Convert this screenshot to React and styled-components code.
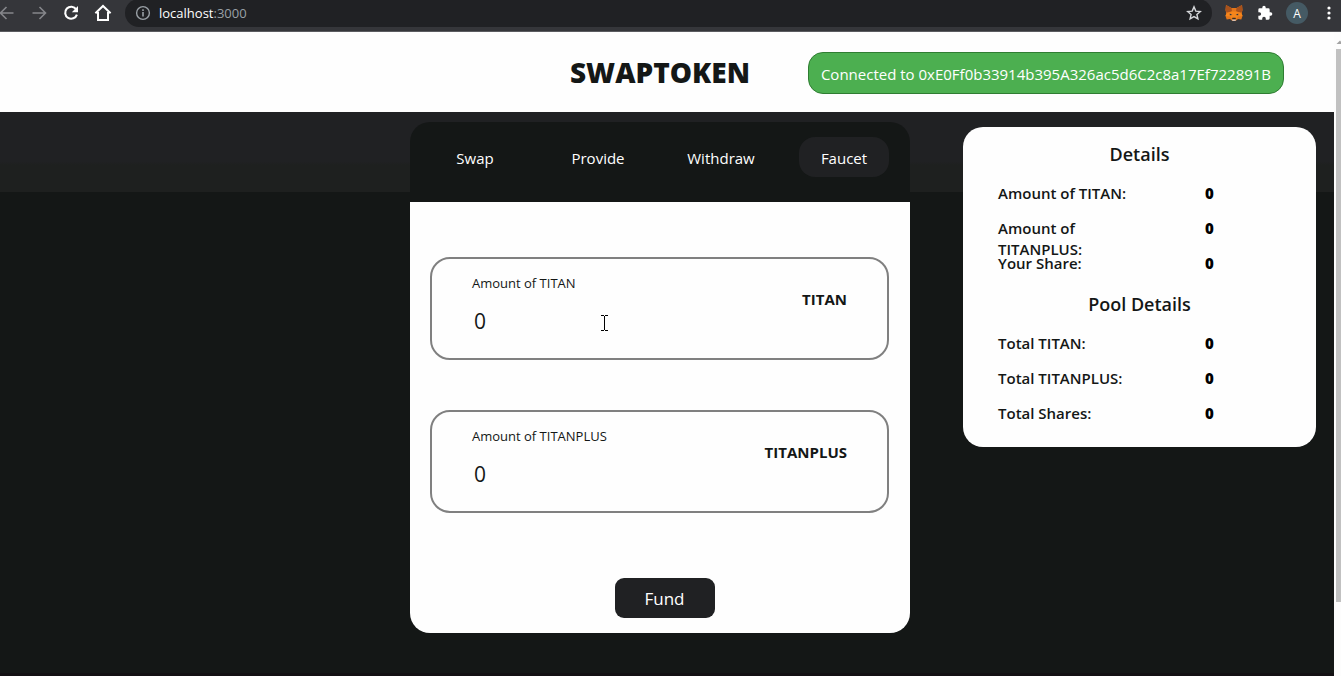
import React from 'react';
import styled, { createGlobalStyle } from 'styled-components';

const GlobalStyle = createGlobalStyle`
  *, *::before, *::after { box-sizing: border-box; }
  body {
    margin: 0;
    background: #141716;
    color: #141716;
    font-family: "Open Sans", "Noto Sans", sans-serif;
    font-size: 15px;
  }
  h1, h2, dl, dd { margin: 0; }
  button, input { font-family: inherit; }
`;

const Browser = styled.div`
  display: flex;
  flex-direction: column;
  min-height: 100vh;
`;

const Toolbar = styled.div`
  display: flex;
  align-items: center;
  height: 32px;
  padding: 0 2px 5px 0;
  background: #35363a;
  border-bottom: 1px solid #5b5c60;
`;

const NavButtons = styled.div`
  display: flex;
  gap: 12px;
  margin-left: -3px;
`;

const ToolButton = styled.button`
  display: flex;
  align-items: center;
  justify-content: center;
  width: 20px;
  height: 20px;
  padding: 0;
  border: 0;
  background: none;
  color: ${(p) => (p.$dim ? '#85868a' : '#ffffff')};
`;

const AddressBar = styled.div`
  flex: 1;
  display: flex;
  align-items: center;
  gap: 8px;
  height: 28px;
  margin: 0 12px;
  padding: 0 8px 0 10px;
  border-radius: 14px;
  background: #202124;
  color: #9aa0a6;
  font-size: 13px;
`;

const Url = styled.span`
  flex: 1;
  b { color: #ffffff; font-weight: 400; }
`;

const Extensions = styled.div`
  display: flex;
  align-items: center;
  gap: 11px;
`;

const Avatar = styled.button`
  width: 22px;
  height: 22px;
  padding: 0;
  border: 0;
  border-radius: 50%;
  background: #455a64;
  color: #ffffff;
  font-size: 12px;
`;

const Viewport = styled.div`
  flex: 1;
  display: flex;
`;

const Page = styled.div`
  flex: 1;
  min-width: 0;
  display: flex;
  flex-direction: column;
  border-bottom: 3px solid #131013;
`;

const Scrollbar = styled.div`
  display: flex;
  flex-direction: column;
  width: 7px;
  padding: 8px 0 0 2px;
  background: #fdfdfd;
  svg { flex: none; }
`;

const Thumb = styled.div`
  height: 87%;
  background: #c1c1c1;
`;

const Header = styled.header`
  display: flex;
  align-items: center;
  justify-content: flex-end;
  gap: 58px;
  height: 80px;
  padding: 2px 50px 0 20px;
  background: #fefefe;
`;

const Title = styled.h1`
  font-size: 28px;
  line-height: 40px;
  padding-bottom: 2px;
  font-weight: 800;
`;

const Connection = styled.button`
  width: 476px;
  height: 42px;
  padding: 2px 0 0;
  border: 1px solid #2f7d32;
  border-radius: 15px;
  background: #4caf50;
  color: #ffffff;
  font-size: 15px;
  white-space: nowrap;
`;

const Main = styled.main`
  flex: 1;
  display: grid;
  grid-template-columns: minmax(0, 1fr) 500px minmax(0, 1fr);
  align-items: start;
  padding: 10px 14px 40px 0;
  background: linear-gradient(#202123 0 62%, #1e201f 66%) no-repeat top / 100% 80px, #141716;
`;

const Card = styled.section`
  grid-column: 2;
`;

const Tabs = styled.nav`
  display: flex;
  justify-content: space-between;
  height: 80px;
  padding: 15px 21px 0 20px;
  border-radius: 20px 20px 0 0;
  background: #141716;
`;

const Tab = styled.button`
  width: 90px;
  height: 40px;
  padding: 2px 0 0;
  border: 0;
  border-radius: 16px;
  background: ${(p) => (p.$active ? '#202123' : 'transparent')};
  color: #ffffff;
  font-size: 15px;
`;

const Form = styled.form`
  display: flex;
  flex-direction: column;
  gap: 50px;
  padding: 55px 21px 15px 20px;
  border-radius: 0 0 20px 20px;
  background: #fefefe;
`;

const FieldBox = styled.div`
  position: relative;
  display: flex;
  justify-content: space-between;
  height: 103px;
  padding: 14px 40px 0;
  border: 2px solid #808080;
  border-radius: 20px;
`;

const Entry = styled.div`
  display: flex;
  flex-direction: column;
  gap: 11px;
`;

const Label = styled.label`
  font-size: 13px;
  line-height: 20px;
`;

const Amount = styled.input`
  width: 220px;
  height: 34px;
  padding: 0 2px;
  border: 0;
  outline: 0;
  background: transparent;
  color: #141716;
  font-size: 21px;
`;

const Symbol = styled.span`
  padding-top: 16px;
  font-size: 15px;
  line-height: 20px;
  font-weight: 700;
`;

const TextCursor = styled.svg`
  position: absolute;
  left: 168px;
  top: 55px;
`;

const FundButton = styled.button`
  align-self: center;
  width: 100px;
  height: 40px;
  margin: 15px 0 0 10px;
  padding: 0;
  border: 0;
  border-radius: 9px;
  background: #202123;
  color: #ffffff;
  font-size: 17px;
`;

const Details = styled.aside`
  justify-self: end;
  width: 353px;
  max-width: 100%;
  margin: 5px 4px 0 0;
  padding: 7px 35px 13px;
  border-radius: 20px;
  background: #fefefe;
`;

const Heading = styled.h2`
  height: 40px;
  font-size: 18px;
  line-height: 40px;
  font-weight: 600;
  text-align: center;
`;

const Stats = styled.dl`
  padding-top: 5px;
`;

const Stat = styled.div`
  display: grid;
  grid-template-columns: 140px 1fr;
  column-gap: 67px;
  height: 35px;
  padding-top: 4px;
  font-size: 15px;
  line-height: 21px;
  dt { font-weight: 600; }
  dd { font-weight: 800; color: #000000; }
`;

const yourDetails = [
  ['Amount of TITAN:', '0'],
  ['Amount of TITANPLUS:', '0'],
  ['Your Share:', '0'],
];

const poolDetails = [
  ['Total TITAN:', '0'],
  ['Total TITANPLUS:', '0'],
  ['Total Shares:', '0'],
];

const Arrow = ({ flip }) => (
  <svg width="16" height="16" viewBox="0 0 16 16" fill="none" stroke="currentColor" strokeWidth="1.6">
    <path d={flip ? 'M1.5 8h12.5M8.5 2l6 6-6 6' : 'M14.5 8H2M7.5 2l-6 6 6 6'} />
  </svg>
);

const Reload = () => (
  <svg width="16" height="16" viewBox="0 0 16 16" fill="none" stroke="currentColor" strokeWidth="2.1">
    <path d="M13.2 4.4A6 6 0 1 0 13.9 9.6" />
    <path d="M15 1v6.2H8.8z" fill="currentColor" stroke="none" />
  </svg>
);

const Home = () => (
  <svg width="18" height="18" viewBox="0 0 18 18" fill="none" stroke="currentColor" strokeWidth="2">
    <path d="M1.4 9.3 9 2l7.6 7.3M4 8v8h10V8" />
  </svg>
);

const Info = () => (
  <svg width="16" height="16" viewBox="0 0 16 16" fill="none" stroke="currentColor" strokeWidth="1.4">
    <circle cx="8" cy="8" r="6.4" />
    <path d="M8 7v4.6M8 4.2v1.8" strokeWidth="1.6" />
  </svg>
);

const Star = () => (
  <svg width="16" height="16" viewBox="0 0 16 16" fill="none" stroke="#d5d7da" strokeWidth="1.4">
    <path d="M8 1.9l1.8 4.2 4.5.4-3.4 3 1 4.4L8 11.6l-3.9 2.3 1-4.4-3.4-3 4.5-.4z" />
  </svg>
);

const Fox = () => (
  <svg width="18" height="18" viewBox="0 0 18 18">
    <path d="M1 1 6.500 4h5L17 1l.5 5-.8 3.500.8 2.500-1.200 3.500-3.300-.5-2.500 2h-3L5 15l-3.300.5L.5 12l.8-2.500L.5 6z" fill="#e2761b" />
    <path d="M1 1 6.500 4 7 7.500 1.500 8.500.5 6zM17 1l-5.500 3-.5 3.500 5.500 1 1-2.500z" fill="#a8521c" />
    <path d="M1.300 9.500 6.500 7.500h5l5.200 2 .8 2.500-4.500.5-2 2.500h-4l-2-2.500L.5 12z" fill="#f6851b" />
    <path d="M4.800 9.600l2.500 1.300-2.500.4zM13.200 9.600l-2.500 1.300 2.500.4z" fill="#233447" />
    <path d="M7.400 13.800h3.200l.4 1.800H7z" fill="#3a2c20" />
    <path d="M6.800 15.600h4.400l-.8 1.400H7.600z" fill="#d7c1b3" />
  </svg>
);

const Puzzle = () => (
  <svg width="16" height="16" viewBox="0 0 24 24" fill="currentColor">
    <path d="M20.500 11H19V7a2 2 0 0 0-2-2h-4V3.500a2.500 2.500 0 0 0-5 0V5H4a2 2 0 0 0-2 2v3.800h1.500a2.700 2.700 0 0 1 0 5.400H2V20a2 2 0 0 0 2 2h3.800v-1.500a2.700 2.700 0 0 1 5.400 0V22H17a2 2 0 0 0 2-2v-4h1.500a2.500 2.500 0 0 0 0-5z" />
  </svg>
);

const Menu = () => (
  <svg width="4" height="16" viewBox="0 0 4 16" fill="currentColor">
    <circle cx="2" cy="3" r="1.600" /><circle cx="2" cy="8" r="1.600" /><circle cx="2" cy="13" r="1.600" />
  </svg>
);

function TokenField({ id, token, children }) {
  return (
    <FieldBox>
      <Entry>
        <Label htmlFor={id}>Amount of {token}</Label>
        <Amount id={id} type="text" inputMode="decimal" defaultValue="0" />
      </Entry>
      <Symbol>{token}</Symbol>
      {children}
    </FieldBox>
  );
}

function StatList({ rows }) {
  return (
    <Stats>
      {rows.map(([name, value]) => (
        <Stat key={name}>
          <dt>{name}</dt>
          <dd>{value}</dd>
        </Stat>
      ))}
    </Stats>
  );
}

export default function App() {
  return (
    <Browser>
      <GlobalStyle />
      <Toolbar>
        <NavButtons>
          <ToolButton $dim aria-label="Back"><Arrow /></ToolButton>
          <ToolButton $dim aria-label="Forward"><Arrow flip /></ToolButton>
          <ToolButton aria-label="Reload"><Reload /></ToolButton>
          <ToolButton aria-label="Home"><Home /></ToolButton>
        </NavButtons>
        <AddressBar>
          <Info />
          <Url><b>localhost</b>:3000</Url>
          <ToolButton aria-label="Bookmark"><Star /></ToolButton>
        </AddressBar>
        <Extensions>
          <ToolButton aria-label="Wallet"><Fox /></ToolButton>
          <ToolButton aria-label="Extensions"><Puzzle /></ToolButton>
          <Avatar aria-label="Profile">A</Avatar>
          <ToolButton aria-label="Menu"><Menu /></ToolButton>
        </Extensions>
      </Toolbar>
      <Viewport>
        <Page>
          <Header>
            <Title>SWAPTOKEN</Title>
            <Connection>Connected to 0xE0Ff0b33914b395A326ac5d6C2c8a17Ef722891B</Connection>
          </Header>
          <Main>
            <Card>
              <Tabs>
                <Tab>Swap</Tab>
                <Tab>Provide</Tab>
                <Tab>Withdraw</Tab>
                <Tab $active>Faucet</Tab>
              </Tabs>
              <Form>
                <TokenField id="titan" token="TITAN">
                  <TextCursor width="9" height="18" viewBox="0 0 9 18" fill="none" stroke="#000000" aria-hidden="true">
                    <path d="M1 1.500h3M5 1.500h3M4.500 2v14M1 16.500h3M5 16.500h3" />
                  </TextCursor>
                </TokenField>
                <TokenField id="titanplus" token="TITANPLUS" />
                <FundButton type="button">Fund</FundButton>
              </Form>
            </Card>
            <Details>
              <Heading>Details</Heading>
              <StatList rows={yourDetails} />
              <Heading>Pool Details</Heading>
              <StatList rows={poolDetails} />
            </Details>
          </Main>
        </Page>
        <Scrollbar aria-hidden="true">
          <svg width="5" height="9" viewBox="0 0 5 9"><path d="M0.500 4 4 0.500 5 1.500V4z" fill="#a3a3a3" /></svg>
          <Thumb />
        </Scrollbar>
      </Viewport>
    </Browser>
  );
}
